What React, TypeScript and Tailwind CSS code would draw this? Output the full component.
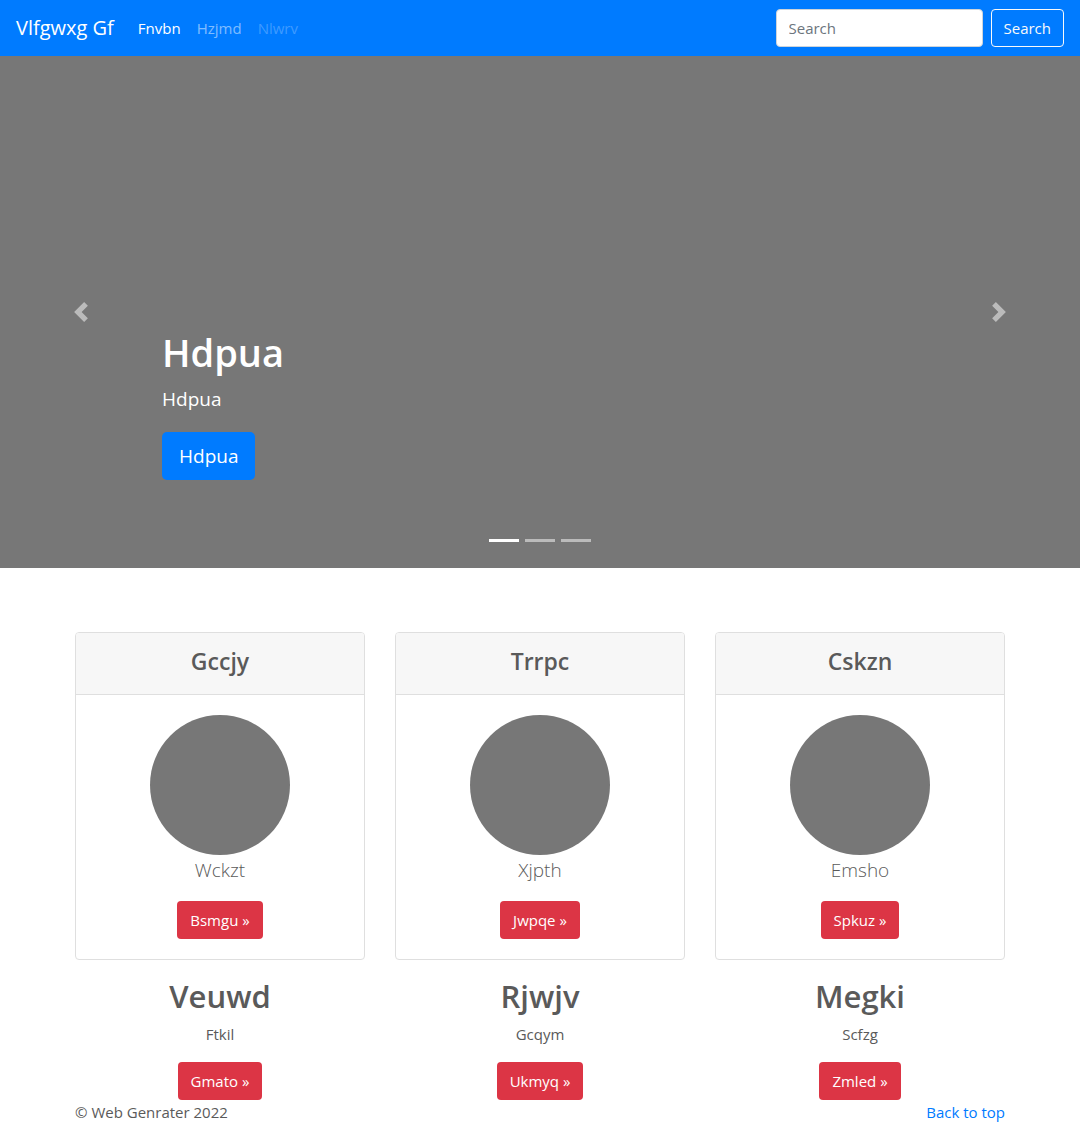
import React from "react";

type Item = { title: string; text: string; action: string };

const cards: Item[] = [
  { title: "Gccjy", text: "Wckzt", action: "Bsmgu" },
  { title: "Trrpc", text: "Xjpth", action: "Jwpqe" },
  { title: "Cskzn", text: "Emsho", action: "Spkuz" },
];

const features: Item[] = [
  { title: "Veuwd", text: "Ftkil", action: "Gmato" },
  { title: "Rjwjv", text: "Gcqym", action: "Ukmyq" },
  { title: "Megki", text: "Scfzg", action: "Zmled" },
];

function Navbar() {
  return (
    <header className="flex h-14 items-center bg-[#007bff] px-4 text-white">
      <a href="#" className="mr-6 text-[20px] leading-[30px]">Vlfgwxg Gf</a>
      <nav className="flex gap-4 text-[15px] leading-6">
        <a href="#" className="text-white">Fnvbn</a>
        <a href="#" className="text-white/50">Hzjmd</a>
        <a href="#" aria-disabled="true" className="text-white/25">Nlwrv</a>
      </nav>
      <form className="ml-auto flex gap-2" onSubmit={(e) => e.preventDefault()}>
        <input
          type="search"
          aria-label="Search"
          placeholder="Search"
          className="h-[38px] w-[207px] rounded border border-[#ced4da] bg-white px-3 text-[15px] leading-6 text-[#495057] placeholder:text-[#6c757d]"
        />
        <button type="submit" className="h-[38px] rounded border border-[#f8f9fa] px-3 text-[15px] leading-6 text-[#f8f9fa]">
          Search
        </button>
      </form>
    </header>
  );
}

function Chevron({ path }: { path: string }) {
  return (
    <svg viewBox="0 0 8 8" className="size-5" fill="#fff" aria-hidden="true">
      <path d={path} />
    </svg>
  );
}

function Carousel() {
  return (
    <section className="relative flex h-[512px] items-end bg-[#777] px-[15%] pb-[88px] text-white">
      <div>
        <h1 className="mb-2 text-[38px] leading-[48px] font-semibold">Hdpua</h1>
        <p className="mb-[18px] text-[19px] leading-[30px]">Hdpua</p>
        <a href="#" className="inline-block rounded-[5px] bg-[#007bff] px-[17px] py-[9px] text-[19px] leading-[30px] align-top">
          Hdpua
        </a>
      </div>
      <button type="button" aria-label="Previous" className="absolute inset-y-0 left-0 flex w-[15%] items-center justify-center opacity-50">
        <Chevron path="M5.25 0l-4 4 4 4 1.5-1.5L4.25 4l2.5-2.5L5.25 0z" />
      </button>
      <button type="button" aria-label="Next" className="absolute inset-y-0 right-0 flex w-[15%] items-center justify-center opacity-50">
        <Chevron path="M2.75 0l-1.5 1.5L3.75 4l-2.5 2.5L2.75 8l4-4-4-4z" />
      </button>
      <div className="absolute inset-x-0 bottom-[26px] flex justify-center gap-1.5">
        <button type="button" aria-label="Slide 1" className="h-[3px] w-[30px] bg-white" />
        <button type="button" aria-label="Slide 2" className="h-[3px] w-[30px] bg-white/50" />
        <button type="button" aria-label="Slide 3" className="h-[3px] w-[30px] bg-white/50" />
      </div>
    </section>
  );
}

function RedButton({ label }: { label: string }) {
  return (
    <a href="#" className="inline-block rounded bg-[#dc3545] px-[13px] py-[7px] align-top text-[15px] leading-6 text-white">
      {label} »
    </a>
  );
}

export default function App() {
  return (
    <div className="bg-white font-['Open_Sans',sans-serif] text-[15px] leading-6 text-[#5a5a5a]">
      <Navbar />
      <main>
        <Carousel />
        <div className="mx-auto mt-16 max-w-[960px] px-[15px] text-center">
          <div className="mb-4 grid grid-cols-3 gap-[30px]">
            {cards.map((c) => (
              <article key={c.title} className="rounded border border-[#dfdfdf]">
                <div className="rounded-t-[3px] border-b border-[#dfdfdf] bg-[#f7f7f7] pt-[13px] pb-[18px]">
                  <h4 className="text-[23px] leading-[30px] font-semibold">{c.title}</h4>
                </div>
                <div className="p-5">
                  <div className="mx-auto size-[140px] rounded-full bg-[#777]" />
                  <p className="mb-4 text-[19px] leading-[30px] font-light">{c.text}</p>
                  <RedButton label={c.action} />
                </div>
              </article>
            ))}
          </div>
          <div className="grid grid-cols-3 gap-[30px]">
            {features.map((f) => (
              <article key={f.title}>
                <h2 className="mb-1.5 text-[31px] leading-[40px] font-semibold">{f.title}</h2>
                <p className="mb-4">{f.text}</p>
                <RedButton label={f.action} />
              </article>
            ))}
          </div>
        </div>
      </main>
      <footer className="mx-auto flex max-w-[960px] justify-between px-[15px]">
        <p>© Web Genrater 2022</p>
        <a href="#" className="text-[#007bff]">Back to top</a>
      </footer>
    </div>
  );
}
